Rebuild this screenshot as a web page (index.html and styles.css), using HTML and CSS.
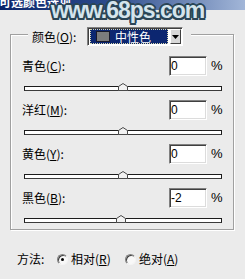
FILE: index.html
```html
<!DOCTYPE html>
<html lang="zh-CN">

<head>
  <meta charset="UTF-8">
  <meta name="viewport" content="width=device-width, initial-scale=1.0">
  <title>可选颜色选项</title>
  <link rel="stylesheet" href="styles.css">
</head>

<body>
  <div class="dialog">
    <div class="titlebar"><span class="title">可选颜色选项</span></div>
    <div class="watermark">www.68ps.com</div>

    <div class="group">
      <div class="legend">
        <span class="label">颜色(<u>O</u>):</span>
        <div class="select">
          <div class="select-value"><span class="swatch"></span>中性色</div>
          <div class="select-arrow">
            <svg width="7" height="4" viewBox="0 0 7 4"><polygon points="0,0 7,0 3.5,4" fill="#000" /></svg>
          </div>
        </div>
      </div>

      <div class="channel">
        <div class="row">
          <span class="label">青色(<u>C</u>):</span>
          <div class="field">0</div>
          <span class="unit">%</span>
        </div>
        <div class="track">
          <svg class="thumb" width="10" height="8" viewBox="0 0 10 8"><polygon points="5,0.5 9.5,3.5 9.5,7.5 0.5,7.5 0.5,3.5" /></svg>
        </div>
      </div>

      <div class="channel">
        <div class="row">
          <span class="label">洋红(<u>M</u>):</span>
          <div class="field">0</div>
          <span class="unit">%</span>
        </div>
        <div class="track">
          <svg class="thumb" width="10" height="8" viewBox="0 0 10 8"><polygon points="5,0.5 9.5,3.5 9.5,7.5 0.5,7.5 0.5,3.5" /></svg>
        </div>
      </div>

      <div class="channel">
        <div class="row">
          <span class="label">黄色(<u>Y</u>):</span>
          <div class="field">0</div>
          <span class="unit">%</span>
        </div>
        <div class="track">
          <svg class="thumb" width="10" height="8" viewBox="0 0 10 8"><polygon points="5,0.5 9.5,3.5 9.5,7.5 0.5,7.5 0.5,3.5" /></svg>
        </div>
      </div>

      <div class="channel">
        <div class="row">
          <span class="label">黑色(<u>B</u>):</span>
          <div class="field">-2</div>
          <span class="unit">%</span>
        </div>
        <div class="track">
          <svg class="thumb" style="left: calc(49% - 5px)" width="10" height="8" viewBox="0 0 10 8"><polygon points="5,0.5 9.5,3.5 9.5,7.5 0.5,7.5 0.5,3.5" /></svg>
        </div>
      </div>
    </div>

    <div class="method">
      <span class="label">方法:</span>
      <span class="radio checked"></span>
      <span class="option">相对(<u>R</u>)</span>
      <span class="radio"></span>
      <span class="option">绝对(<u>A</u>)</span>
    </div>
  </div>
</body>

</html>
```

FILE: styles.css
```css
body {
  margin: 0;
  background-color: #ebebeb;
  font-family: "Noto Sans CJK SC", sans-serif;
  font-size: 12px;
  line-height: 14px;
  color: #000;
}

u {
  text-underline-offset: 1px;
}

.dialog {
  position: relative;
  width: 245px;
  height: 279px;
  overflow: hidden;
}

/* title bar, cut off at the top */
.titlebar {
  height: 10px;
  overflow: hidden;
  background: linear-gradient(to right, #0a246a, #2c4c8c 45%, #a2b6d8);
}

.title {
  display: block;
  margin-top: -5px;
  margin-left: -1px;
  color: #fff;
  font-weight: bold;
  font-size: 12px;
  line-height: 14px;
}

.watermark {
  position: absolute;
  top: -1px;
  left: 51px;
  font-family: "Liberation Sans", Arial, sans-serif;
  font-weight: bold;
  font-size: 23px;
  line-height: 22px;
  letter-spacing: -1px;
  color: #d4e4ec;
  text-shadow:
    -2px 0 0 #2a4556, 2px 0 0 #2a4556, 0 -2px 0 #2a4556, 0 2px 0 #2a4556,
    -1.5px -1.5px 0 #2a4556, 1.5px -1.5px 0 #2a4556, -1.5px 1.5px 0 #2a4556, 1.5px 1.5px 0 #2a4556;
}

/* etched group box */
.group {
  box-sizing: border-box;
  width: 224px;
  height: 196px;
  margin: 24px 0 0 10px;
  padding: 0 10px 0 11px;
  border: 1px solid #a0a0a0;
  box-shadow: inset 1px 1px 0 #fff, 1px 1px 0 #fff;
}

.legend {
  display: flex;
  align-items: center;
  width: fit-content;
  height: 19px;
  margin: -8px 0 10px 6px;
  padding: 0 8px 0 4px;
  background-color: #ebebeb;
}

.legend .label {
  width: 55px;
}

.select {
  display: flex;
  gap: 2px;
  box-sizing: border-box;
  width: 96px;
  height: 19px;
  padding: 1px 1px 1px 2px;
  border: 1px solid;
  border-color: #808080 #fff #fff #808080;
  box-shadow: inset 1px 1px 0 #404040;
  background-color: #fff;
}

.select-value {
  flex: 1;
  display: flex;
  align-items: center;
  gap: 5px;
  padding-left: 5px;
  border: 1px dotted #d8d8b0;
  background-color: #0c2670;
  color: #fff;
}

.swatch {
  box-sizing: border-box;
  width: 14px;
  height: 11px;
  border: 1px solid #1a1a2a;
  background-color: #7c7c7c;
}

.select-arrow {
  display: flex;
  align-items: center;
  justify-content: center;
  box-sizing: border-box;
  width: 11px;
  border: 1px solid;
  border-color: #fff #404040 #404040 #fff;
  background-color: #d8d8d8;
}

/* channel rows */
.channel + .channel {
  margin-top: 9px;
}

.row {
  display: flex;
  align-items: center;
  height: 20px;
}

.row .label {
  flex: 1;
}

.field {
  box-sizing: border-box;
  width: 38px;
  height: 20px;
  padding-left: 1px;
  border: 1px solid;
  border-color: #808080 #fff #fff #808080;
  box-shadow: inset 1px 1px 0 #404040, inset -1px -1px 0 #dcdcdc;
  background-color: #fff;
  font-family: "Liberation Sans", Arial, sans-serif;
  font-size: 12px;
  line-height: 18px;
}

.unit {
  width: 12px;
  margin-left: 4px;
  font-family: "Liberation Sans", Arial, sans-serif;
  font-size: 13px;
}

.track {
  position: relative;
  box-sizing: border-box;
  height: 5px;
  margin: 10px 1px 0 2px;
  border: 1px solid #1c1c1c;
  border-bottom-color: #3a3a3a;
  background-color: #fff;
}

.thumb {
  position: absolute;
  top: -4px;
  left: calc(50% - 5px);
  fill: #f2f2f2;
  stroke: #4a4a4a;
  stroke-width: 1;
}

/* method radios */
.method {
  display: flex;
  align-items: center;
  height: 12px;
  margin: 23px 0 0 17px;
}

.method .label {
  width: 40px;
}

.radio {
  position: relative;
  box-sizing: border-box;
  width: 11px;
  height: 11px;
  margin-right: 3px;
  border: 1px solid;
  border-color: #808080 #f4f4f4 #f4f4f4 #808080;
  border-radius: 50%;
  box-shadow: inset 1px 1px 0 #404040;
  background-color: #f8f8f8;
}

.radio.checked::after {
  content: "";
  position: absolute;
  top: 3px;
  left: 3px;
  width: 3px;
  height: 3px;
  border-radius: 50%;
  background-color: #000;
}

.option {
  width: 54px;
}
```
